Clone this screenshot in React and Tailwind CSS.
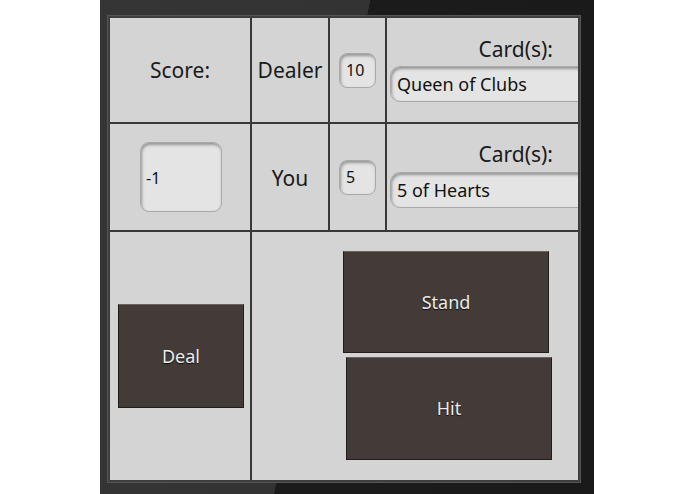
export default function App() {
  const field =
    "bg-[#e4e4e4] border border-[#a9a9a9] shadow-[inset_1px_2px_3px_rgba(0,0,0,0.35)] text-[#111]";
  const btn =
    "flex items-center justify-center bg-[#433b38] border border-[#221d1b] border-t-[#6a625f] text-[#ececec] text-[18px] [text-shadow:0_1px_1px_rgba(0,0,0,0.8)]";

  return (
    <div className="w-[695px] h-[494px] bg-white pl-[100px] font-['Noto_Sans','Open_Sans',sans-serif]">
      <div className="w-[494px] h-[494px] pt-[16px] pl-[8px] bg-[linear-gradient(101deg,#353535_0%,#333_45.8%,#1b1b1b_45.8%,#1a1a1a_100%)]">
        <div className="w-[472px] h-[466px] grid grid-cols-[140px_76px_55px_191px] grid-rows-[104px_106px_248px] gap-[2px] bg-[#383838] border-2 border-[#3e3e3e] shadow-[0_0_0_1px_#555]">
          {/* Row 1: score label and dealer */}
          <div className="bg-[#d4d4d4] flex items-center justify-center pt-[2px] text-[21px] text-[#1a1a1a]">
            Score:
          </div>
          <div className="bg-[#d4d4d4] flex items-center justify-center pt-[2px] text-[21px] text-[#1a1a1a]">
            Dealer
          </div>
          <div className="bg-[#d4d4d4] flex items-center justify-center">
            <div className={`${field} w-[37px] h-[35px] rounded-[8px] flex items-center pl-[6px] text-[16px]`}>
              10
            </div>
          </div>
          <div className="bg-[#d4d4d4] overflow-hidden flex flex-col pt-[17px]">
            <div className="text-right pr-[25px] text-[21px] leading-[28px] text-[#1a1a1a]">Card(s):</div>
            <div className={`${field} mt-[3px] ml-[3px] w-[210px] h-[36px] rounded-[10px] flex items-center pl-[6px] text-[18px]`}>
              Queen of Clubs
            </div>
          </div>

          {/* Row 2: score value and player */}
          <div className="bg-[#d4d4d4] flex items-center justify-center pl-[2px]">
            <div className={`${field} w-[82px] h-[70px] rounded-[9px] flex items-center pl-[5px] pt-[2px] text-[16px]`}>
              -1
            </div>
          </div>
          <div className="bg-[#d4d4d4] flex items-center justify-center pt-[3px] text-[21px] text-[#1a1a1a]">
            You
          </div>
          <div className="bg-[#d4d4d4] flex items-center justify-center">
            <div className={`${field} w-[37px] h-[35px] rounded-[8px] flex items-center pl-[6px] text-[16px]`}>
              5
            </div>
          </div>
          <div className="bg-[#d4d4d4] overflow-hidden flex flex-col pt-[16px]">
            <div className="text-right pr-[25px] text-[21px] leading-[28px] text-[#1a1a1a]">Card(s):</div>
            <div className={`${field} mt-[4px] ml-[3px] w-[210px] h-[36px] rounded-[10px] flex items-center pl-[6px] text-[18px]`}>
              5 of Hearts
            </div>
          </div>

          {/* Row 3: actions */}
          <div className="bg-[#d4d4d4] flex items-center pl-[8px]">
            <div className={`${btn} w-[126px] h-[104px]`}>Deal</div>
          </div>
          <div className="col-span-3 bg-[#d4d4d4] flex flex-col pt-[19px] gap-[4px]">
            <div className={`${btn} ml-[91px] w-[206px] h-[102px]`}>Stand</div>
            <div className={`${btn} ml-[94px] w-[206px] h-[103px]`}>Hit</div>
          </div>
        </div>
      </div>
    </div>
  );
}
